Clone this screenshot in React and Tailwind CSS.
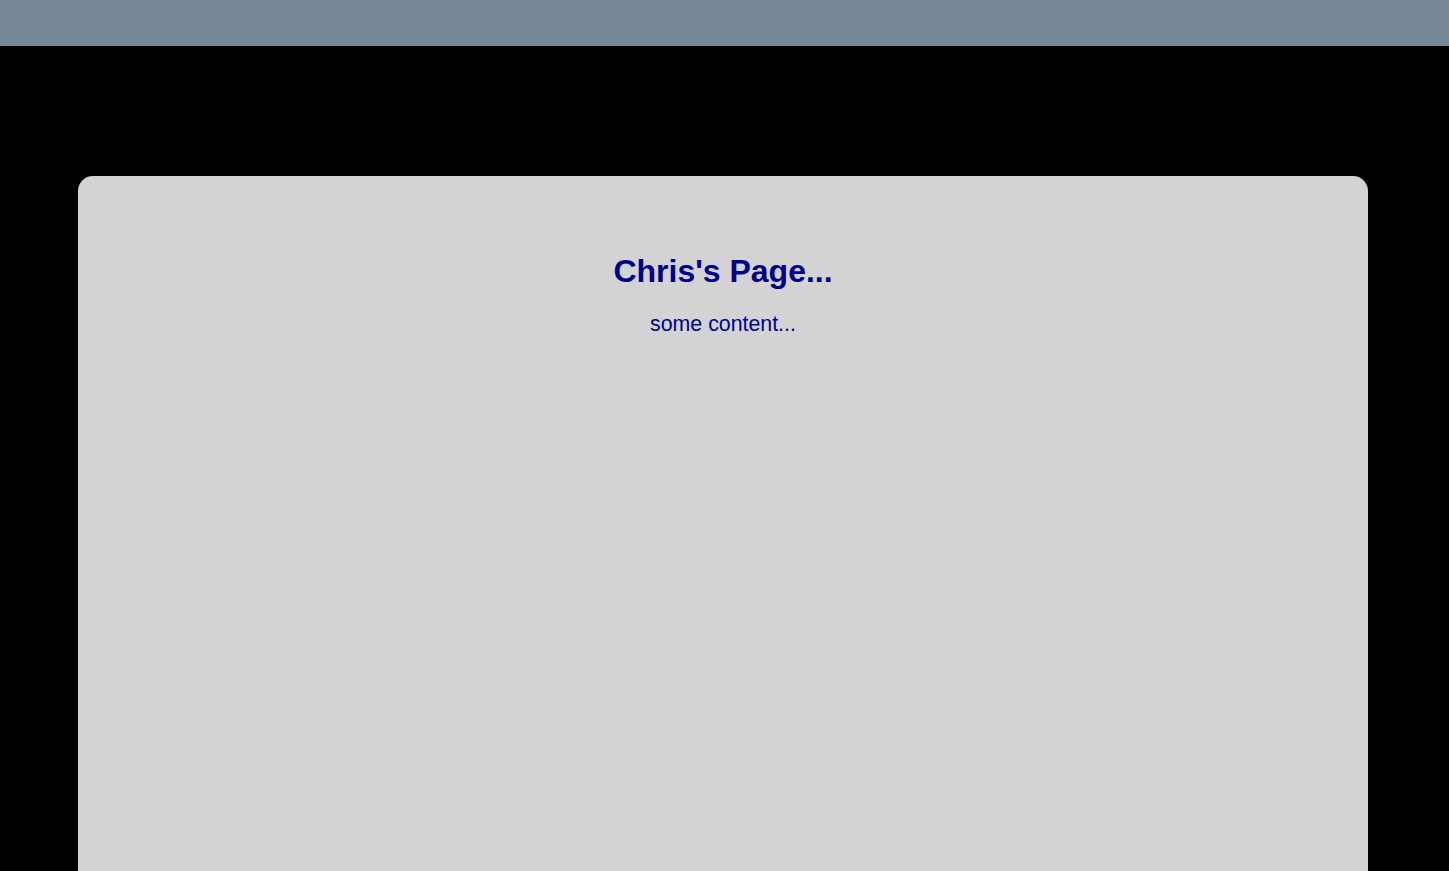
import React from "react";

export default function App() {
  return (
    <div className="h-screen w-full overflow-hidden bg-black font-['Liberation_Sans',Arial,sans-serif]">
      <div className="h-[46px] bg-[#778899]" />
      <div className="mt-[130px] ml-[78px] w-[1290px] h-[760px] rounded-[15px] bg-[#d3d3d3] pt-[77px] flex flex-col items-center text-[#00008b]">
        <h1 className="text-[32px] font-bold leading-[normal]">Chris's Page...</h1>
        <p className="mt-[22px] text-[21.33px] leading-[normal]">some content...</p>
      </div>
    </div>
  );
}
